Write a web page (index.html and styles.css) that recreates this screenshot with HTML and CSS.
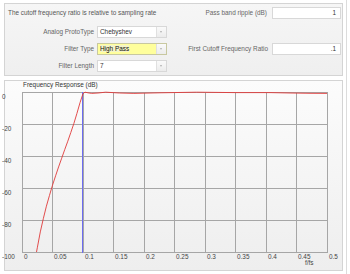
FILE: index.html
```html
<!DOCTYPE html>
<html lang="en">
<head>
  <meta charset="UTF-8">
  <meta name="viewport" content="width=device-width, initial-scale=1.0">
  <title>Filter Designer</title>
  <link rel="stylesheet" href="styles.css">
</head>
<body>
  <div class="frame">
    <div class="settings">
      <div class="note">The cutoff frequency ratio is relative to sampling rate</div>
      <label class="label right-col">Pass band ripple (dB)</label>
      <div class="textbox">1</div>

      <label class="label">Analog ProtoType</label>
      <div class="combo"><span class="combo-text">Chebyshev</span><span class="combo-btn"></span></div>
      <div></div><div></div>

      <label class="label">Filter Type</label>
      <div class="combo active"><span class="combo-text"><span class="sel">High Pass</span></span><span class="combo-btn"></span></div>
      <label class="label">First Cutoff Frequency Ratio</label>
      <div class="textbox">.1</div>

      <label class="label">Filter Length</label>
      <div class="combo"><span class="combo-text">7</span><span class="combo-btn"></span></div>
    </div>

    <div class="chart-panel">
      <svg class="chart" width="337" height="189" viewBox="5 81 337 189">
        <text class="title" x="23" y="87">Frequency Response (dB)</text>

        <!-- horizontal grid -->
        <g class="grid">
          <line x1="22" y1="92.5" x2="327" y2="92.5"/>
          <line x1="22" y1="124.5" x2="327" y2="124.5"/>
          <line x1="22" y1="156.5" x2="327" y2="156.5"/>
          <line x1="22" y1="188.5" x2="327" y2="188.5"/>
          <line x1="22" y1="220.5" x2="327" y2="220.5"/>
          <line x1="22" y1="252.5" x2="327" y2="252.5"/>
          <!-- vertical grid -->
          <line x1="22.5" y1="92" x2="22.5" y2="253"/>
          <line x1="52.5" y1="92" x2="52.5" y2="253"/>
          <line x1="83.5" y1="92" x2="83.5" y2="253"/>
          <line x1="113.5" y1="92" x2="113.5" y2="253"/>
          <line x1="144.5" y1="92" x2="144.5" y2="253"/>
          <line x1="174.5" y1="92" x2="174.5" y2="253"/>
          <line x1="205.5" y1="92" x2="205.5" y2="253"/>
          <line x1="235.5" y1="92" x2="235.5" y2="253"/>
          <line x1="266.5" y1="92" x2="266.5" y2="253"/>
          <line x1="296.5" y1="92" x2="296.5" y2="253"/>
          <line x1="327.5" y1="92" x2="327.5" y2="253"/>
        </g>

        <g class="axis">
          <text x="2" y="98.5">0</text>
          <text x="2" y="130.5">-20</text>
          <text x="2" y="162.5">-40</text>
          <text x="2" y="194.5">-60</text>
          <text x="2" y="226.5">-80</text>
          <text x="2" y="258.5">-100</text>

          <text x="24" y="258.5">0</text>
          <text x="54" y="258.5">0.05</text>
          <text x="85" y="258.5">0.1</text>
          <text x="115" y="258.5">0.15</text>
          <text x="146" y="258.5">0.2</text>
          <text x="176" y="258.5">0.25</text>
          <text x="207" y="258.5">0.3</text>
          <text x="237" y="258.5">0.35</text>
          <text x="268" y="258.5">0.4</text>
          <text x="298" y="258.5">0.45</text>
          <text x="329" y="258.5">0.5</text>
          <text x="305" y="264.5">f/fs</text>
        </g>

        <line class="cutoff" x1="82.5" y1="92" x2="82.5" y2="253"/>

        <polyline class="response" points="36.5,252 37.3,247.8 40.3,231.9 43.4,218.3 46.4,206.2 49.5,195.3 52.5,185.2 55.6,175.8 58.6,166.9 61.7,158.2 64.7,149.7 67.8,141.2 70.8,132.5 73.9,123.4 76.9,113.5 80,102.7 83,93.6 85,92.2 88,92.8 91.7,93.4 98,93 105.6,92.2 119.6,93 133.9,93.4 160,92.8 196.5,92.2 235,92.6 270,92.6 290,93 310,93.3 327,93.4"/>
      </svg>
    </div>
  </div>
</body>
</html>
```

FILE: styles.css
```css
body {
  margin: 0;
  background: #fff;
  font-family: "Liberation Sans", Arial, sans-serif;
  color: #505050;
}
.frame {
  width: 342px;
  padding: 3px 0 3px 4px;
  border-right: 1px solid #dcdcdc;
  min-height: 271px;
}
.settings {
  box-sizing: border-box;
  width: 339px;
  height: 73px;
  border: 1px solid #d4d4d4;
  background: linear-gradient(#f6f6f6, #efefef);
  padding: 3px 0 0 0;
  display: grid;
  grid-template-columns: 89px 70px 98px 70px;
  grid-template-rows: 19px 17px 17px 12px;
  column-gap: 3px;
  align-items: start;
  font-size: 6.4px;
}
.settings > :nth-child(n) {
  height: 12px;
  line-height: 12px;
}
.note {
  grid-column: 1 / 3;
  padding-left: 3px;
  color: #555;
}
.label {
  text-align: right;
  color: #666;
  white-space: nowrap;
}
.right-col {
  margin-right: 1px;
}
.textbox {
  box-sizing: border-box;
  margin-left: 1px;
  border: 1px solid #d8d8d8;
  background: #fff;
  text-align: right;
  padding-right: 4px;
  color: #333;
  line-height: 10px !important;
}
.combo {
  box-sizing: border-box;
  display: flex;
  border: 1px solid #d8d8d8;
  background: #fff;
  line-height: 10px !important;
  color: #333;
}
.combo-text {
  flex: 1;
  padding-left: 2px;
}
.combo-btn {
  width: 9px;
  border-left: 1px solid #e0e0e0;
  background: linear-gradient(#fafafa, #ececec);
  position: relative;
}
.combo-btn::after {
  content: "";
  position: absolute;
  left: 3px;
  top: 4px;
  border-left: 1.5px solid transparent;
  border-right: 1.5px solid transparent;
  border-top: 2px solid #b0b0b0;
}
.combo.active {
  border-color: #c8c8a0;
}
.combo.active .combo-text {
  background: #ffff9c;
}
.sel {
  background: #f4f4c8;
  color: #111;
}
.chart-panel {
  box-sizing: border-box;
  width: 339px;
  height: 191px;
  margin-top: 4px;
  border: 1px solid #d4d4d4;
  background: linear-gradient(#fcfcfc, #eeeeee);
}
.chart {
  display: block;
  overflow: visible;
  font-family: "Liberation Sans", Arial, sans-serif;
}
.title {
  font-size: 6.4px;
  fill: #333;
}
.axis text {
  font-size: 6.4px;
  fill: #444;
}
.grid line {
  stroke: #a6a6a6;
  stroke-width: 1;
}
.cutoff {
  stroke: #6c6cf0;
  stroke-width: 1;
}
.response {
  fill: none;
  stroke: #e03a3a;
  stroke-width: 0.9;
}
```
